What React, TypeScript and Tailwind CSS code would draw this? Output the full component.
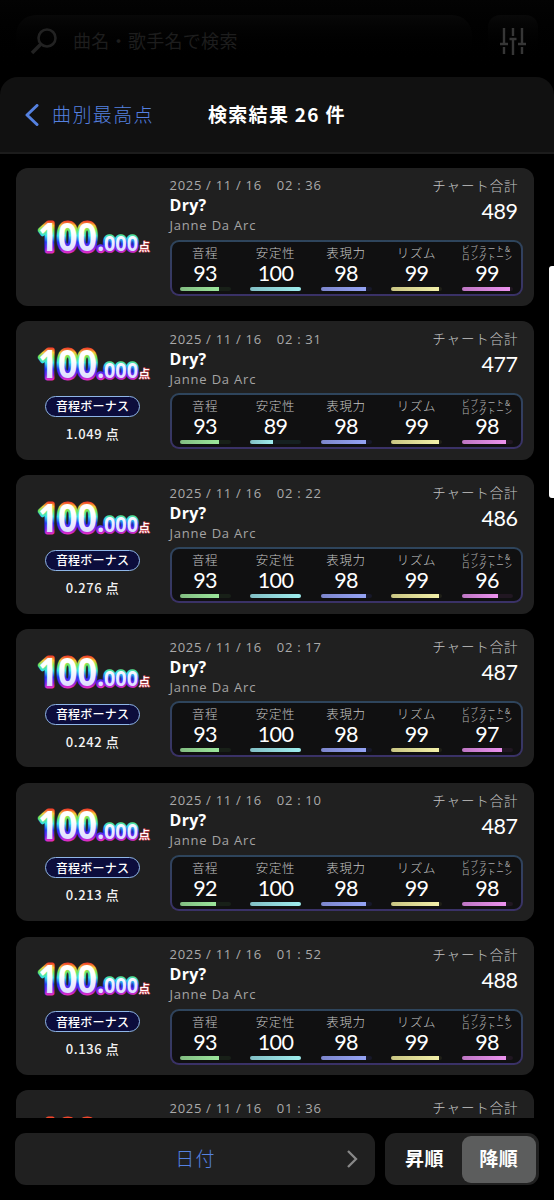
import React from 'react';

type Metric = { value: number; fill: number };

const LABELS = ['音程', '安定性', '表現力', 'リズム', 'ビブラート&ロングトーン'];

const BARS = [
  'from-[#82bd82] to-[#9be69b]',
  'from-[#82bfc5] to-[#9eeeee]',
  'from-[#7d86cc] to-[#94a3f5]',
  'from-[#c9c583] to-[#f3f0a8]',
  'from-[#bd76c3] to-[#ec92ee]',
];

const TRACKS = ['bg-[#182018]', 'bg-[#152021]', 'bg-[#17182a]', 'bg-[#202018]', 'bg-[#211722]'];

const m = (value: number, fill: number): Metric => ({ value, fill });

const results = [
  { time: '02 : 36', bonus: null, total: 489, metrics: [m(93, 78), m(100, 100), m(98, 90), m(99, 95), m(99, 95)] },
  { time: '02 : 31', bonus: '1.049', total: 477, metrics: [m(93, 78), m(89, 45), m(98, 90), m(99, 95), m(98, 87)] },
  { time: '02 : 22', bonus: '0.276', total: 486, metrics: [m(93, 78), m(100, 100), m(98, 90), m(99, 95), m(96, 71)] },
  { time: '02 : 17', bonus: '0.242', total: 487, metrics: [m(93, 78), m(100, 100), m(98, 90), m(99, 95), m(97, 79)] },
  { time: '02 : 10', bonus: '0.213', total: 487, metrics: [m(92, 71), m(100, 100), m(98, 90), m(99, 95), m(98, 87)] },
  { time: '01 : 52', bonus: '0.136', total: 488, metrics: [m(93, 78), m(100, 100), m(98, 90), m(99, 95), m(98, 87)] },
  { time: '01 : 36', bonus: '', total: 488, metrics: [] },
];

function Score() {
  return (
    <svg width="118" height="62" viewBox="0 -10 118 62" className="-my-[10px] block shrink-0 overflow-visible font-['Open_Sans','Noto_Sans_CJK_JP',sans-serif] font-bold">
      <defs>
        <linearGradient id="rainbow" gradientUnits="userSpaceOnUse" x1="0" y1="6" x2="0" y2="38">
          <stop offset="0" stopColor="#f03a2a" />
          <stop offset="0.14" stopColor="#f5c53a" />
          <stop offset="0.28" stopColor="#6fe85a" />
          <stop offset="0.46" stopColor="#35e0e8" />
          <stop offset="0.66" stopColor="#2438f0" />
          <stop offset="0.83" stopColor="#7a20e8" />
          <stop offset="1" stopColor="#e82fc0" />
        </linearGradient>
        <linearGradient id="rainbowSmall" gradientUnits="userSpaceOnUse" x1="0" y1="18" x2="0" y2="38">
          <stop offset="0" stopColor="#62e868" />
          <stop offset="0.25" stopColor="#35d8e8" />
          <stop offset="0.55" stopColor="#2430f0" />
          <stop offset="0.8" stopColor="#8a20e8" />
          <stop offset="1" stopColor="#e82fc0" />
        </linearGradient>
        <linearGradient id="face" gradientUnits="userSpaceOnUse" x1="0" y1="6" x2="0" y2="36">
          <stop offset="0.4" stopColor="#ffffff" />
          <stop offset="1" stopColor="#dcdcff" />
        </linearGradient>
      </defs>
      <g strokeLinejoin="round" paintOrder="stroke" fill="url(#face)">
        <text x="4" y="35.5" stroke="url(#rainbow)" strokeWidth="5" fontSize="39" textLength="59" lengthAdjust="spacingAndGlyphs">100</text>
        <text x="63" y="35.5" stroke="url(#rainbow)" strokeWidth="4.5" fontSize="26">.</text>
        <text x="70" y="35.5" fontSize="22" textLength="34" lengthAdjust="spacingAndGlyphs" stroke="url(#rainbowSmall)" strokeWidth="3.6">000</text>
        <text x="104.5" y="36" fontSize="11.5" fill="#fff" stroke="#c94b5c" strokeWidth="1.2" className="font-['Noto_Sans_CJK_JP',sans-serif] font-medium">点</text>
      </g>
    </svg>
  );
}

function Gauge({ index, metric }: { index: number; metric: Metric }) {
  return (
    <div className="flex w-[51px] flex-col items-center">
      {index === 4 ? (
        <div className="flex h-[19px] flex-col pt-[3.5px] pl-px text-[7.5px] leading-[8px] tracking-[1.1px] whitespace-nowrap text-[#aaa]">
          <span>ビブラート&amp;</span>
          <span>ロングトーン</span>
        </div>
      ) : (
        <div className="h-[19px] text-[12.5px] leading-[21px] font-light tracking-[0.6px] whitespace-nowrap text-[#c4c4c4]">{LABELS[index]}</div>
      )}
      <div className="h-[26px] font-[Lato,sans-serif] text-[21.5px] leading-[24px] tracking-[-0.6px] text-white">{metric.value}</div>
      <div className={`h-1 w-full overflow-hidden rounded-full ${TRACKS[index]}`}>
        <div className={`h-full bg-linear-to-r ${BARS[index]}`} style={{ width: `${metric.fill}%` }} />
      </div>
    </div>
  );
}

function ResultCard({ result }: { result: (typeof results)[number] }) {
  return (
    <div className="flex h-[138.3px] w-full shrink-0 rounded-[12px] bg-[#202020]">
      <div className={`flex w-[154px] shrink-0 flex-col items-center ${result.bonus === null ? 'pt-[47.5px]' : 'pt-[20.5px]'}`}>
        <Score />
        {result.bonus && (
          <>
            <div className="mt-[12px] flex h-[21px] w-[95px] items-center justify-center rounded-full border-[1.5px] border-[#8fb6e8] bg-[#0c0d3c] text-[12px] font-medium tracking-[0.2px] text-white">
              音程ボーナス
            </div>
            <div className="mt-[7px] text-[13px] leading-5 font-medium tracking-[0.6px] text-[#f2f2f2]">{result.bonus} 点</div>
          </>
        )}
      </div>
      <div className="flex flex-1 flex-col pt-[7px] pr-[11px]">
        <div className="flex h-[65px] justify-between">
          <div className="flex flex-col pt-[0.5px] font-['Open_Sans',sans-serif] whitespace-nowrap">
            <div className="flex gap-[15px] text-[13px] leading-[21px] tracking-[0.7px] text-[#aaa]">
              <span>2025 / 11 / 16</span>
              <span>{result.time}</span>
            </div>
            <span className="text-[16px] leading-[19px] font-bold tracking-[0.3px] text-white">Dry?</span>
            <span className="text-[13px] leading-[21px] tracking-[0.8px] text-[#a4a4a4]">Janne Da Arc</span>
          </div>
          <div className="flex flex-col items-end pr-[4px]">
            <span className="text-[13.5px] leading-5 font-light tracking-[0.9px] text-[#c4c4c4]">チャート合計</span>
            <span className="pr-px font-[Lato,sans-serif] text-[21.5px] leading-[32px] tracking-[-0.5px] text-white">{result.total}</span>
          </div>
        </div>
        <div className="h-[56px] rounded-[9px] bg-linear-to-b from-[#2e455c] to-[#3a3167] p-[2px]">
          <div className="flex h-full justify-between rounded-[7px] bg-[#101011] px-[8px]">
            {result.metrics.map((metric, i) => (
              <Gauge key={i} index={i} metric={metric} />
            ))}
          </div>
        </div>
      </div>
    </div>
  );
}

export default function App() {
  return (
    <div className="flex h-[1200px] w-[554px] flex-col overflow-hidden bg-black font-['Noto_Sans_CJK_JP',sans-serif]">
      {/* Dimmed search bar */}
      <div className="flex h-[77px] shrink-0 items-start gap-4 bg-linear-to-b from-[#030303] to-black pt-[15px] pl-[16px]">
        <div className="flex h-[51px] w-[456px] items-center rounded-[20px] bg-linear-to-b from-[#080808] to-black pl-[14px] text-[#1d1d1d]">
          <svg width="28" height="28" viewBox="0 0 28 28" fill="none" stroke="#222" strokeWidth="2.6">
            <circle cx="17" cy="11" r="8.5" />
            <path d="M11 17 2 26" strokeWidth="3.5" />
          </svg>
          <span className="-mt-px ml-[15px] text-[18px] leading-6 tracking-[0.3px]">曲名・歌手名で検索</span>
        </div>
        <div className="flex h-[51px] w-[50px] items-center justify-center rounded-[12px] bg-linear-to-b from-[#090909] to-black">
          <svg width="28" height="28" viewBox="0 0 28 28" fill="none" stroke="#363636" strokeWidth="2.4">
            <path d="M5 1v16M1 17h8M5 20v7M14 1v8M10.5 12h7M14 12v16M23 1v16M19 17h8M23 20v7" />
          </svg>
        </div>
      </div>

      {/* Sheet header */}
      <div className="-mb-px flex h-[77px] shrink-0 items-center rounded-t-[18px] border-b-2 border-[#1c1c1c] bg-[#111] pl-[25px]">
        <svg width="14" height="22" viewBox="0 0 14 22" fill="none" stroke="#5581e0" strokeWidth="3" strokeLinecap="round" strokeLinejoin="round">
          <path d="M12 1.5 2 11l10 9.5" />
        </svg>
        <span className="ml-[13px] w-[156px] text-[19px] font-light tracking-[1.4px] text-[#5581e0]">曲別最高点</span>
        <h1 className="text-[19px] font-bold tracking-[1.3px] whitespace-nowrap text-white">検索結果 26 件</h1>
      </div>

      {/* Results */}
      <div className="flex h-[965px] shrink-0 overflow-hidden">
        <div className="ml-[15.5px] flex w-[518px] shrink-0 flex-col gap-[15.5px] pt-[14.7px]">
          {results.map((result) => (
            <ResultCard key={result.time} result={result} />
          ))}
        </div>
        <div className="mt-[113px] ml-auto h-[232px] w-[5px] rounded-l-[3px] bg-white" />
      </div>

      {/* Sort controls */}
      <div className="mt-[15px] flex h-[52px] shrink-0 gap-[10px] pl-[15px]">
        <button className="flex w-[360px] items-center rounded-[11px] bg-[#202020] text-[19px] font-light tracking-[1.2px] text-[#5581e0]">
          <span className="-mt-[2px] flex-1 pl-[1px] text-center">日付</span>
          <svg width="12" height="20" viewBox="0 0 12 20" fill="none" stroke="#888" strokeWidth="2.3" className="mr-[17px] -ml-[29px] shrink-0">
            <path d="m2 2 8 8-8 8" />
          </svg>
        </button>
        <div className="flex w-[153.5px] rounded-[11px] bg-[#202020] p-[2.5px] text-[19px] font-bold tracking-[0.5px] text-white">
          <button className="-mt-[2px] w-[74px]">昇順</button>
          <button className="flex-1 rounded-[9px] bg-[#5c5d5d] pb-[2px]">降順</button>
        </div>
      </div>
    </div>
  );
}
